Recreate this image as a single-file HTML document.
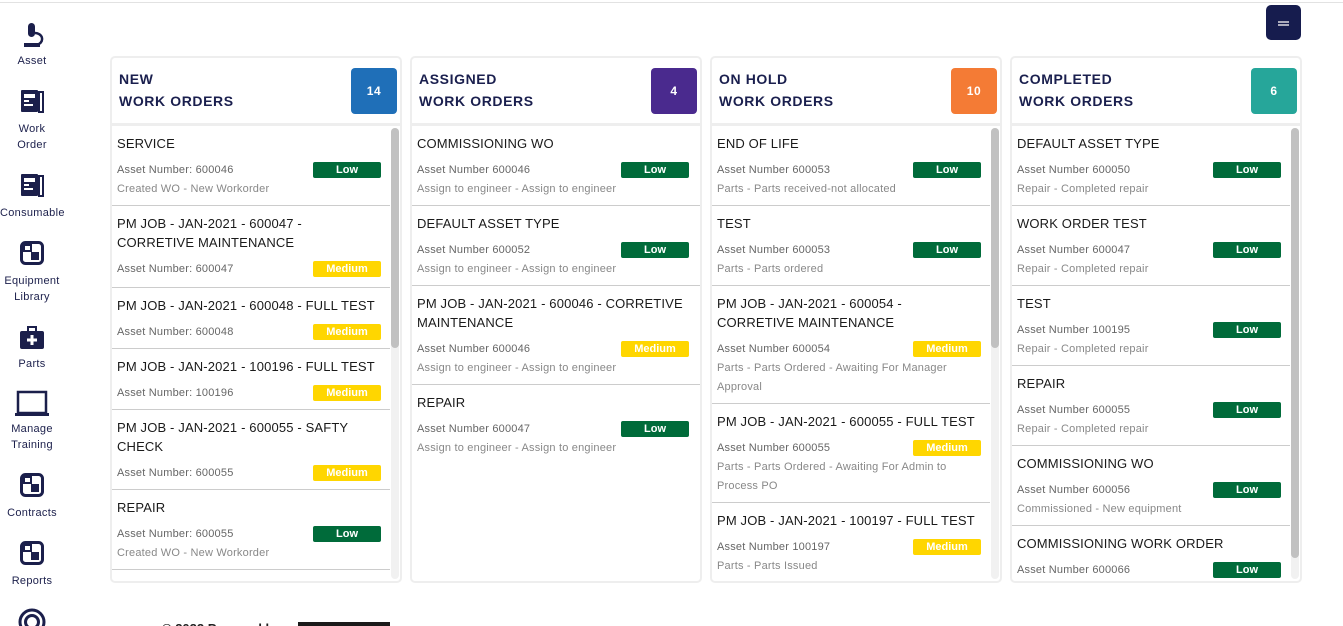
<!DOCTYPE html>
<html><head><meta charset="utf-8"><style>
*{box-sizing:border-box;margin:0;padding:0}
html,body{width:1343px;height:626px;overflow:hidden}
body{background:#fff;font-family:"Liberation Sans",sans-serif;position:relative}
.topline{position:absolute;left:0;top:2px;width:1343px;height:1px;background:#e2e2e2}
.btn{position:absolute;left:1266px;top:5px;width:35px;height:35px;background:#161c4e;border-radius:5px}
.btn i{position:absolute;left:12px;width:11px;height:1.5px;background:#aab}
.nav{position:absolute;left:0;width:64px;text-align:center;font-size:11px;color:#1b1f4b;line-height:16px;letter-spacing:.3px}
.nav svg{display:block;margin:0 auto}
.col{position:absolute;top:56px;width:292px;height:527px;border:2px solid #eee;border-radius:5px;background:#fff;overflow:hidden}
.hd{height:68px;border-bottom:3px solid #eee;position:relative;padding:10px 0 0 7px;font-weight:bold;font-size:14px;line-height:22px;color:#1a1f4e;letter-spacing:.6px}
.cnt{position:absolute;right:3px;top:10px;width:46px;height:46px;border-radius:4px;color:#fff;font-size:12px;font-weight:bold;line-height:46px;text-align:center}
.list{position:absolute;top:68px;left:0;right:0;bottom:0;overflow:hidden}
.sb{position:absolute;right:1px;top:2px;width:8px;bottom:2px;background:#f1f1f1;border-radius:4px}
.sb b{position:absolute;left:0;top:0;width:8px;background:#c1c1c1;border-radius:4px}
.it{border-bottom:1px solid #ccc;padding:8px 10px 6px 5px;margin-right:10px}
.t{font-size:13px;line-height:19px;color:#1a1a1a;letter-spacing:.15px}
.a{position:relative;margin-top:8px;font-size:11px;line-height:19px;color:#666;letter-spacing:.2px}
.s{font-size:11px;line-height:19px;color:#888;letter-spacing:.2px}
.bd{position:absolute;right:-1px;top:1px;width:68px;height:16px;border-radius:2px;color:#fff;font-weight:bold;font-size:11px;line-height:16px;text-align:center;letter-spacing:0}
.L{background:#006b3a}.M{background:#ffd600}
</style></head><body>
<div class="topline"></div>
<div class="btn"><i style="top:16px"></i><i style="top:19px"></i></div>

<div class="nav" style="top:22px"><svg width="26" height="26" viewBox="0 0 26 26"><rect x="9" y="1" width="7" height="14" rx="3.5" fill="#1b1f4b"/><path d="M16 11a7 6 0 0 1 4 11" stroke="#1b1f4b" stroke-width="2.5" fill="none"/><rect x="5" y="21" width="16" height="4" fill="#1b1f4b"/></svg><div style="margin-top:5px">Asset</div></div>
<div class="nav" style="top:88px"><svg width="26" height="26" viewBox="0 0 26 26"><rect x="2" y="2" width="17" height="22" rx="1" fill="#1b1f4b"/><rect x="5" y="6" width="11" height="4" fill="#fff"/><rect x="5" y="12" width="5" height="2" fill="#fff"/><rect x="5" y="16" width="9" height="2" fill="#fff"/><rect x="20" y="4" width="4" height="20" fill="none" stroke="#1b1f4b" stroke-width="2"/></svg><div style="margin-top:7px">Work<br>Order</div></div>
<div class="nav" style="top:172px"><svg width="26" height="26" viewBox="0 0 26 26"><rect x="2" y="2" width="17" height="22" rx="1" fill="#1b1f4b"/><rect x="5" y="6" width="11" height="4" fill="#fff"/><rect x="5" y="12" width="5" height="2" fill="#fff"/><rect x="5" y="16" width="9" height="2" fill="#fff"/><rect x="20" y="4" width="4" height="20" fill="none" stroke="#1b1f4b" stroke-width="2"/></svg><div style="margin-top:7px">Consumable</div></div>
<div class="nav" style="top:240px"><svg width="26" height="26" viewBox="0 0 26 26"><rect x="2.5" y="2.5" width="21" height="21" rx="4" fill="none" stroke="#1b1f4b" stroke-width="3"/><rect x="5" y="5" width="7" height="6" fill="none" stroke="#1b1f4b" stroke-width="2"/><path d="M12 12h8v8h-8z" fill="#1b1f4b"/></svg><div style="margin-top:7px">Equipment<br>Library</div></div>
<div class="nav" style="top:325px"><svg width="26" height="26" viewBox="0 0 26 26"><rect x="9" y="2" width="8" height="5" fill="none" stroke="#1b1f4b" stroke-width="2"/><rect x="1" y="6" width="24" height="18" rx="2" fill="#1b1f4b"/><path d="M13 10v10M8 15h10" stroke="#fff" stroke-width="3"/></svg><div style="margin-top:5px">Parts</div></div>
<div class="nav" style="top:390px"><svg width="34" height="28" viewBox="0 0 34 28"><rect x="3" y="2" width="28" height="21" fill="none" stroke="#1b1f4b" stroke-width="2.5"/><rect x="0" y="23" width="34" height="3" fill="#1b1f4b"/></svg><div style="margin-top:3px">Manage<br>Training</div></div>
<div class="nav" style="top:472px"><svg width="26" height="26" viewBox="0 0 26 26"><rect x="2.5" y="2.5" width="21" height="21" rx="4" fill="none" stroke="#1b1f4b" stroke-width="3"/><rect x="5" y="5" width="7" height="6" fill="none" stroke="#1b1f4b" stroke-width="2"/><path d="M12 12h8v8h-8z" fill="#1b1f4b"/></svg><div style="margin-top:7px">Contracts</div></div>
<div class="nav" style="top:540px"><svg width="26" height="26" viewBox="0 0 26 26"><rect x="2.5" y="2.5" width="21" height="21" rx="4" fill="none" stroke="#1b1f4b" stroke-width="3"/><rect x="5" y="5" width="7" height="6" fill="none" stroke="#1b1f4b" stroke-width="2"/><path d="M12 12h8v8h-8z" fill="#1b1f4b"/></svg><div style="margin-top:7px">Reports</div></div>
<div class="nav" style="top:608px"><svg width="28" height="28" viewBox="0 0 28 28"><circle cx="14" cy="14" r="12" fill="none" stroke="#1b1f4b" stroke-width="3"/><circle cx="14" cy="14" r="6.5" fill="none" stroke="#1b1f4b" stroke-width="3"/></svg></div>

<div style="position:absolute;left:162px;top:621px;font-size:13px;font-weight:bold;color:#222">© 2022 Powered by</div>
<div style="position:absolute;left:298px;top:622px;width:92px;height:6px;background:#1a1a1a"></div>

<div class="col" style="left:110px">
<div class="hd">NEW<br>WORK ORDERS<div class="cnt" style="background:#1f6fb8">14</div></div>
<div class="list"><div class="sb"><b style="height:220px"></b></div>
<div class="it"><div class="t">SERVICE</div><div class="a">Asset Number: 600046<span class="bd L">Low</span></div><div class="s">Created WO - New Workorder</div></div>
<div class="it" style="padding-bottom:8px"><div class="t">PM JOB - JAN-2021 - 600047 - CORRETIVE MAINTENANCE</div><div class="a">Asset Number: 600047<span class="bd M">Medium</span></div></div>
<div class="it"><div class="t">PM JOB - JAN-2021 - 600048 - FULL TEST</div><div class="a">Asset Number: 600048<span class="bd M">Medium</span></div></div>
<div class="it"><div class="t">PM JOB - JAN-2021 - 100196 - FULL TEST</div><div class="a">Asset Number: 100196<span class="bd M">Medium</span></div></div>
<div class="it"><div class="t">PM JOB - JAN-2021 - 600055 - SAFTY CHECK</div><div class="a">Asset Number: 600055<span class="bd M">Medium</span></div></div>
<div class="it"><div class="t">REPAIR</div><div class="a">Asset Number: 600055<span class="bd L">Low</span></div><div class="s">Created WO - New Workorder</div></div>
</div></div>

<div class="col" style="left:410px">
<div class="hd">ASSIGNED<br>WORK ORDERS<div class="cnt" style="background:#4a2a8e">4</div></div>
<div class="list">
<div class="it" style="margin-right:0;padding-right:12px"><div class="t">COMMISSIONING WO</div><div class="a">Asset Number 600046<span class="bd L">Low</span></div><div class="s">Assign to engineer - Assign to engineer</div></div>
<div class="it" style="margin-right:0;padding-right:12px"><div class="t">DEFAULT ASSET TYPE</div><div class="a">Asset Number 600052<span class="bd L">Low</span></div><div class="s">Assign to engineer - Assign to engineer</div></div>
<div class="it" style="margin-right:0;padding-right:12px"><div class="t">PM JOB - JAN-2021 - 600046 - CORRETIVE MAINTENANCE</div><div class="a">Asset Number 600046<span class="bd M">Medium</span></div><div class="s">Assign to engineer - Assign to engineer</div></div>
<div style="padding:8px 12px 6px 5px"><div class="t">REPAIR</div><div class="a">Asset Number 600047<span class="bd L">Low</span></div><div class="s">Assign to engineer - Assign to engineer</div></div>
</div></div>

<div class="col" style="left:710px">
<div class="hd">ON HOLD<br>WORK ORDERS<div class="cnt" style="background:#f47b35">10</div></div>
<div class="list"><div class="sb"><b style="height:220px"></b></div>
<div class="it"><div class="t">END OF LIFE</div><div class="a">Asset Number 600053<span class="bd L">Low</span></div><div class="s">Parts - Parts received-not allocated</div></div>
<div class="it"><div class="t">TEST</div><div class="a">Asset Number 600053<span class="bd L">Low</span></div><div class="s">Parts - Parts ordered</div></div>
<div class="it"><div class="t">PM JOB - JAN-2021 - 600054 - CORRETIVE MAINTENANCE</div><div class="a">Asset Number 600054<span class="bd M">Medium</span></div><div class="s">Parts - Parts Ordered - Awaiting For Manager Approval</div></div>
<div class="it"><div class="t">PM JOB - JAN-2021 - 600055 - FULL TEST</div><div class="a">Asset Number 600055<span class="bd M">Medium</span></div><div class="s">Parts - Parts Ordered - Awaiting For Admin to Process PO</div></div>
<div class="it"><div class="t">PM JOB - JAN-2021 - 100197 - FULL TEST</div><div class="a">Asset Number 100197<span class="bd M">Medium</span></div><div class="s">Parts - Parts Issued</div></div>
</div></div>

<div class="col" style="left:1010px">
<div class="hd">COMPLETED<br>WORK ORDERS<div class="cnt" style="background:#26a69a">6</div></div>
<div class="list"><div class="sb"><b style="height:430px"></b></div>
<div class="it"><div class="t">DEFAULT ASSET TYPE</div><div class="a">Asset Number 600050<span class="bd L">Low</span></div><div class="s">Repair - Completed repair</div></div>
<div class="it"><div class="t">WORK ORDER TEST</div><div class="a">Asset Number 600047<span class="bd L">Low</span></div><div class="s">Repair - Completed repair</div></div>
<div class="it"><div class="t">TEST</div><div class="a">Asset Number 100195<span class="bd L">Low</span></div><div class="s">Repair - Completed repair</div></div>
<div class="it"><div class="t">REPAIR</div><div class="a">Asset Number 600055<span class="bd L">Low</span></div><div class="s">Repair - Completed repair</div></div>
<div class="it"><div class="t">COMMISSIONING WO</div><div class="a">Asset Number 600056<span class="bd L">Low</span></div><div class="s">Commissioned - New equipment</div></div>
<div class="it"><div class="t">COMMISSIONING WORK ORDER</div><div class="a">Asset Number 600066<span class="bd L">Low</span></div><div class="s">Commissioned - New equipment</div></div>
</div></div>
</body></html>
